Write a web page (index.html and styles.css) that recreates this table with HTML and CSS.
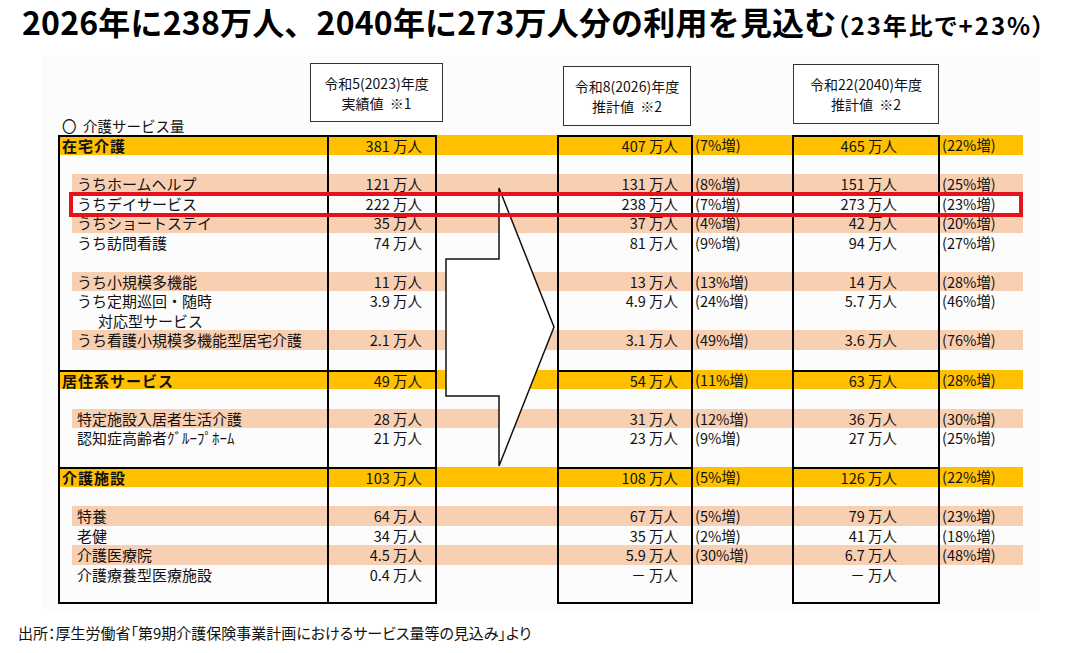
FILE: index.html
```html
<!DOCTYPE html>
<html lang="ja">
<head>
<meta charset="utf-8">
<title>介護サービス量の見込み</title>
<link rel="stylesheet" href="styles.css">
</head>
<body>
<h1 class="title"><span class="main">2026年に238万人、2040年に273万人分の利用を見込む</span><span class="sub">（23年比で+23%）</span></h1>
<div class="panel">
  <div class="heads">
    <div class="caption">〇&nbsp;&nbsp;介護サービス量</div>
    <div class="hbox hb1"><span>令和5(2023)年度</span><span>実績値&nbsp;&nbsp;※1</span></div>
    <div class="hbox hb2"><span>令和8(2026)年度</span><span>推計値&nbsp;&nbsp;※2</span></div>
    <div class="hbox hb3"><span>令和22(2040)年度</span><span>推計値&nbsp;&nbsp;※2</span></div>
  </div>
  <div class="table">
    <div class="sec">
      <div class="row grp"><div class="lab">在宅介護</div><div class="v1">381 万人</div><div class="gap"></div><div class="v2">407 万人</div><div class="p2">(7%増)</div><div class="v3">465 万人</div><div class="p3">(22%増)</div></div>
      <div class="row"><div class="lab"></div><div class="v1"></div><div class="gap"></div><div class="v2"></div><div class="p2"></div><div class="v3"></div><div class="p3"></div></div>
      <div class="row sub"><div class="lab">うちホームヘルプ</div><div class="v1">121 万人</div><div class="gap"></div><div class="v2">131 万人</div><div class="p2">(8%増)</div><div class="v3">151 万人</div><div class="p3">(25%増)</div></div>
      <div class="row hl"><div class="lab">うちデイサービス</div><div class="v1">222 万人</div><div class="gap"></div><div class="v2">238 万人</div><div class="p2">(7%増)</div><div class="v3">273 万人</div><div class="p3">(23%増)</div></div>
      <div class="row sub"><div class="lab">うちショートステイ</div><div class="v1">35 万人</div><div class="gap"></div><div class="v2">37 万人</div><div class="p2">(4%増)</div><div class="v3">42 万人</div><div class="p3">(20%増)</div></div>
      <div class="row"><div class="lab">うち訪問看護</div><div class="v1">74 万人</div><div class="gap"></div><div class="v2">81 万人</div><div class="p2">(9%増)</div><div class="v3">94 万人</div><div class="p3">(27%増)</div></div>
      <div class="row"><div class="lab"></div><div class="v1"></div><div class="gap"></div><div class="v2"></div><div class="p2"></div><div class="v3"></div><div class="p3"></div></div>
      <div class="row sub"><div class="lab">うち小規模多機能</div><div class="v1">11 万人</div><div class="gap"></div><div class="v2">13 万人</div><div class="p2">(13%増)</div><div class="v3">14 万人</div><div class="p3">(28%増)</div></div>
      <div class="row"><div class="lab">うち定期巡回・随時</div><div class="v1">3.9 万人</div><div class="gap"></div><div class="v2">4.9 万人</div><div class="p2">(24%増)</div><div class="v3">5.7 万人</div><div class="p3">(46%増)</div></div>
      <div class="row"><div class="lab ind">対応型サービス</div><div class="v1"></div><div class="gap"></div><div class="v2"></div><div class="p2"></div><div class="v3"></div><div class="p3"></div></div>
      <div class="row sub"><div class="lab">うち看護小規模多機能型居宅介護</div><div class="v1">2.1 万人</div><div class="gap"></div><div class="v2">3.1 万人</div><div class="p2">(49%増)</div><div class="v3">3.6 万人</div><div class="p3">(76%増)</div></div>
      <div class="row"><div class="lab"></div><div class="v1"></div><div class="gap"></div><div class="v2"></div><div class="p2"></div><div class="v3"></div><div class="p3"></div></div>
    </div>
    <div class="sec">
      <div class="row grp"><div class="lab">居住系サービス</div><div class="v1">49 万人</div><div class="gap"></div><div class="v2">54 万人</div><div class="p2">(11%増)</div><div class="v3">63 万人</div><div class="p3">(28%増)</div></div>
      <div class="row"><div class="lab"></div><div class="v1"></div><div class="gap"></div><div class="v2"></div><div class="p2"></div><div class="v3"></div><div class="p3"></div></div>
      <div class="row sub"><div class="lab">特定施設入居者生活介護</div><div class="v1">28 万人</div><div class="gap"></div><div class="v2">31 万人</div><div class="p2">(12%増)</div><div class="v3">36 万人</div><div class="p3">(30%増)</div></div>
      <div class="row"><div class="lab">認知症高齢者ｸﾞﾙｰﾌﾟﾎｰﾑ</div><div class="v1">21 万人</div><div class="gap"></div><div class="v2">23 万人</div><div class="p2">(9%増)</div><div class="v3">27 万人</div><div class="p3">(25%増)</div></div>
      <div class="row"><div class="lab"></div><div class="v1"></div><div class="gap"></div><div class="v2"></div><div class="p2"></div><div class="v3"></div><div class="p3"></div></div>
    </div>
    <div class="sec">
      <div class="row grp"><div class="lab">介護施設</div><div class="v1">103 万人</div><div class="gap"></div><div class="v2">108 万人</div><div class="p2">(5%増)</div><div class="v3">126 万人</div><div class="p3">(22%増)</div></div>
      <div class="row"><div class="lab"></div><div class="v1"></div><div class="gap"></div><div class="v2"></div><div class="p2"></div><div class="v3"></div><div class="p3"></div></div>
      <div class="row sub"><div class="lab">特養</div><div class="v1">64 万人</div><div class="gap"></div><div class="v2">67 万人</div><div class="p2">(5%増)</div><div class="v3">79 万人</div><div class="p3">(23%増)</div></div>
      <div class="row"><div class="lab">老健</div><div class="v1">34 万人</div><div class="gap"></div><div class="v2">35 万人</div><div class="p2">(2%増)</div><div class="v3">41 万人</div><div class="p3">(18%増)</div></div>
      <div class="row sub"><div class="lab">介護医療院</div><div class="v1">4.5 万人</div><div class="gap"></div><div class="v2">5.9 万人</div><div class="p2">(30%増)</div><div class="v3">6.7 万人</div><div class="p3">(48%増)</div></div>
      <div class="row"><div class="lab">介護療養型医療施設</div><div class="v1">0.4 万人</div><div class="gap"></div><div class="v2">－ 万人</div><div class="p2"></div><div class="v3">－ 万人</div><div class="p3"></div></div>
      <div class="row"><div class="lab"></div><div class="v1"></div><div class="gap"></div><div class="v2"></div><div class="p2"></div><div class="v3"></div><div class="p3"></div></div>
    </div>
    <svg class="arrow" width="115" height="285" viewBox="385 50 115 285" aria-hidden="true">
      <polygon points="388,124 441,124 441,53 496,192 441,331 441,261 388,261" fill="#fff" stroke="#111" stroke-width="1.5" stroke-linejoin="miter"/>
    </svg>
  </div>
</div>
<p class="source">出所：厚生労働省「第9期介護保険事業計画におけるサービス量等の見込み」より</p>
</body>
</html>
```
FILE: styles.css
```css
* { box-sizing: border-box; }
html, body { margin: 0; padding: 0; background: #fff; }
body {
  font-family: "Noto Sans CJK JP", "Noto Sans", sans-serif;
  color: #111;
}
.title {
  margin: -2px 0 0 0;
  padding-left: 22px;
  height: 46px;
  line-height: 46px;
  font-size: 32px;
  font-weight: 700;
  white-space: nowrap;
  letter-spacing: 0.2px;
  color: #000;
}
.title .sub {
  font-size: 24px;
  letter-spacing: 2px;
  font-feature-settings: "palt";
}
.panel {
  margin: 11px 0 0 42px;
  width: 998px;
  height: 555px;
  background: #fcfcfc;
}
.heads {
  display: flex;
  align-items: flex-start;
  height: 80px;
  padding-left: 20px;
}
.caption {
  align-self: flex-end;
  width: 248px;
  font-size: 14.5px;
  line-height: 18px;
  white-space: nowrap;
}
.hbox {
  border: 1px solid #333;
  background: #fff;
  display: flex;
  flex-direction: column;
  justify-content: center;
  align-items: center;
  font-size: 14px;
  line-height: 20px;
  white-space: nowrap;
}
.hb1 { margin-top: 8px; width: 133px; height: 59px; }
.hb2 { margin-left: 120px; margin-top: 11px; width: 128px; height: 60px; }
.hb3 { margin-left: 102px; margin-top: 9px; width: 146px; height: 60px; }
.table {
  position: relative;
  margin-left: 16px;
  width: 965px;
}
.row {
  display: grid;
  grid-template-columns: 269px 110px 120px 136px 99px 148px 83px;
  height: 19.55px;
  line-height: 19.55px;
  font-size: 14.5px;
}
.row > div { white-space: nowrap; overflow: visible; }
.row.grp { background: #ffc000; }
.row.sub { background: linear-gradient(to right, transparent 14px, #f9cfb1 14px); }
.lab {
  border-left: 2px solid #000;
  padding-left: 17px;
  font-size: 15px;
}
.grp .lab { padding-left: 2px; font-weight: 700; letter-spacing: 1px; }
.lab.ind { padding-left: 38px; }
.v1, .v2, .v3 {
  border-left: 2px solid #000;
  border-right: 2px solid #000;
  text-align: right;
}
.v1, .v2 { padding-right: 13px; }
.v3 { padding-right: 41px; }
.p2, .p3 { padding-left: 2px; }
.sec > .row:first-child > .lab,
.sec > .row:first-child > .v1,
.sec > .row:first-child > .v2,
.sec > .row:first-child > .v3 {
  border-top: 2px solid #000;
  line-height: 17.55px;
}
.sec:last-of-type > .row:last-child > .lab,
.sec:last-of-type > .row:last-child > .v1,
.sec:last-of-type > .row:last-child > .v2,
.sec:last-of-type > .row:last-child > .v3 {
  border-bottom: 2px solid #000;
}
.row.hl { position: relative; }
.row.hl::after {
  content: "";
  position: absolute;
  left: 11px;
  right: 0;
  top: -2px;
  bottom: -4px;
  border: 4px solid #e3121b;
  z-index: 3;
}
.arrow {
  position: absolute;
  left: 385px;
  top: 50px;
  z-index: 2;
}
.source {
  margin: 13px 0 0 18px;
  font-size: 15px;
  line-height: 20px;
  font-feature-settings: "palt";
  white-space: nowrap;
}
```
